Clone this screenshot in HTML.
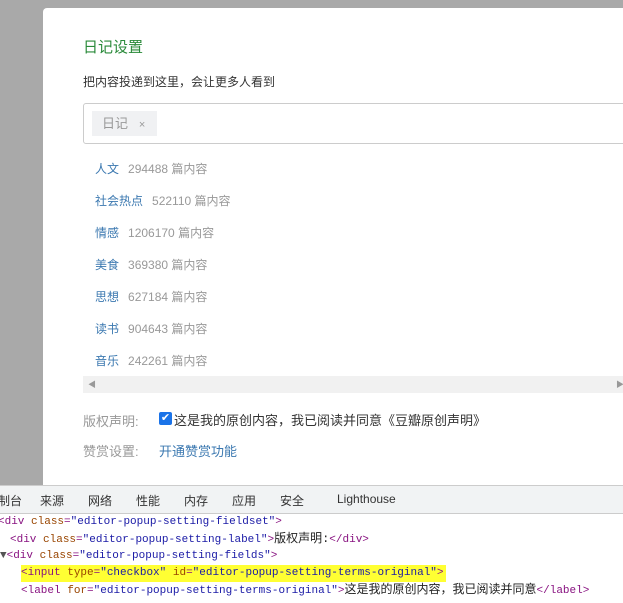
<!DOCTYPE html>
<html><head><meta charset="utf-8"><style>
body{margin:0;width:623px;height:602px;overflow:hidden;background:#a9a9a9;font-family:"Liberation Sans","Noto Sans CJK SC",sans-serif;position:relative}
.modal{position:absolute;left:43px;top:8px;width:600px;height:478px;background:#fff;border-radius:4px 0 0 0}
.a{position:absolute;white-space:nowrap}
.t{left:83px;top:36px;font-size:15px;color:#2a8a3a}
.s{left:83px;top:73px;font-size:12px;color:#333}
.box{left:83px;top:103px;width:560px;height:41px;border:1px solid #ccc;border-radius:3px;box-sizing:border-box}
.tag{left:92px;top:111px;width:55px;height:25px;background:#f0f1f3;font-size:13px;color:#999;line-height:25px;padding-left:10px}
.row{left:95px;font-size:12px;color:#999}
.row b{font-weight:normal;color:#3b78b0;margin-right:9px}
.sb{left:83px;top:376px;width:560px;height:17px;background:#f1f1f1}
.lbl{left:83px;font-size:13px;color:#999}
.dev{position:absolute;left:0;top:485px;width:623px;height:117px;background:#fff;border-top:1px solid #ccc}
.tabs{height:27px;background:#f1f3f4;border-bottom:1px solid #ccc;font-size:12px;color:#333}
.tabs span{position:absolute;top:6px}
.code{font-family:"Liberation Mono","Noto Sans CJK SC",monospace;font-size:11px;color:#881280}
.code .a{height:17px;line-height:17px}
.v{color:#1a1aa6}.at{color:#994500}.tx{color:#222;font-size:12px}
</style></head><body>
<div class="modal"></div>
<div class="a t">日记设置</div>
<div class="a s">把内容投递到这里，会让更多人看到</div>
<div class="a box"></div>
<div class="a tag">日记 &nbsp;&nbsp;<span style="font-size:11px">×</span></div>
<div class="a row" style="top:160px"><b>人文</b>294488 篇内容</div>
<div class="a row" style="top:192px"><b>社会热点</b>522110 篇内容</div>
<div class="a row" style="top:224px"><b>情感</b>1206170 篇内容</div>
<div class="a row" style="top:256px"><b>美食</b>369380 篇内容</div>
<div class="a row" style="top:288px"><b>思想</b>627184 篇内容</div>
<div class="a row" style="top:320px"><b>读书</b>904643 篇内容</div>
<div class="a row" style="top:352px"><b>音乐</b>242261 篇内容</div>
<div class="a sb"><span class="a" style="left:5px;top:3px;font-size:8px;color:#999">◀</span><span class="a" style="left:533px;top:3px;font-size:8px;color:#999">▶</span></div>
<div class="a lbl" style="top:411px">版权声明:</div>
<div class="a" style="left:159px;top:412px;width:13px;height:13px;background:#1a73e8;border-radius:2px;color:#fff;font-size:11px;line-height:13px;text-align:center">✔</div>
<div class="a" style="left:174px;top:410px;font-size:13px;color:#333">这是我的原创内容，我已阅读并同意《豆瓣原创声明》</div>
<div class="a lbl" style="top:441px">赞赏设置:</div>
<div class="a" style="left:159px;top:441px;font-size:13px;color:#3b78b0">开通赞赏功能</div>
<div class="dev">
<div class="tabs"><span style="left:-2px">制台</span><span style="left:40px">来源</span><span style="left:88px">网络</span><span style="left:136px">性能</span><span style="left:184px">内存</span><span style="left:232px">应用</span><span style="left:280px">安全</span><span style="left:337px">Lighthouse</span></div>
<div class="code">
<div class="a" style="left:-2px;top:28px">&lt;div <span class="at">class</span>=<span class="v">"editor-popup-setting-fieldset"</span>&gt;</div>
<div class="a" style="left:10px;top:45px">&lt;div <span class="at">class</span>=<span class="v">"editor-popup-setting-label"</span>&gt;<span class="tx">版权声明:</span>&lt;/div&gt;</div>
<div class="a" style="left:0px;top:62px"><span style="color:#555">▼</span>&lt;div <span class="at">class</span>=<span class="v">"editor-popup-setting-fields"</span>&gt;</div>
<div class="a" style="left:21px;top:79px;background:#ffff33;padding-right:2px">&lt;input <span class="at">type</span>=<span class="v">"checkbox"</span> <span class="at">id</span>=<span class="v">"editor-popup-setting-terms-original"</span>&gt;</div>
<div class="a" style="left:21px;top:96px">&lt;label <span class="at">for</span>=<span class="v">"editor-popup-setting-terms-original"</span>&gt;<span class="tx">这是我的原创内容，我已阅读并同意</span>&lt;/label&gt;</div>
</div>
</div>
</body></html>
